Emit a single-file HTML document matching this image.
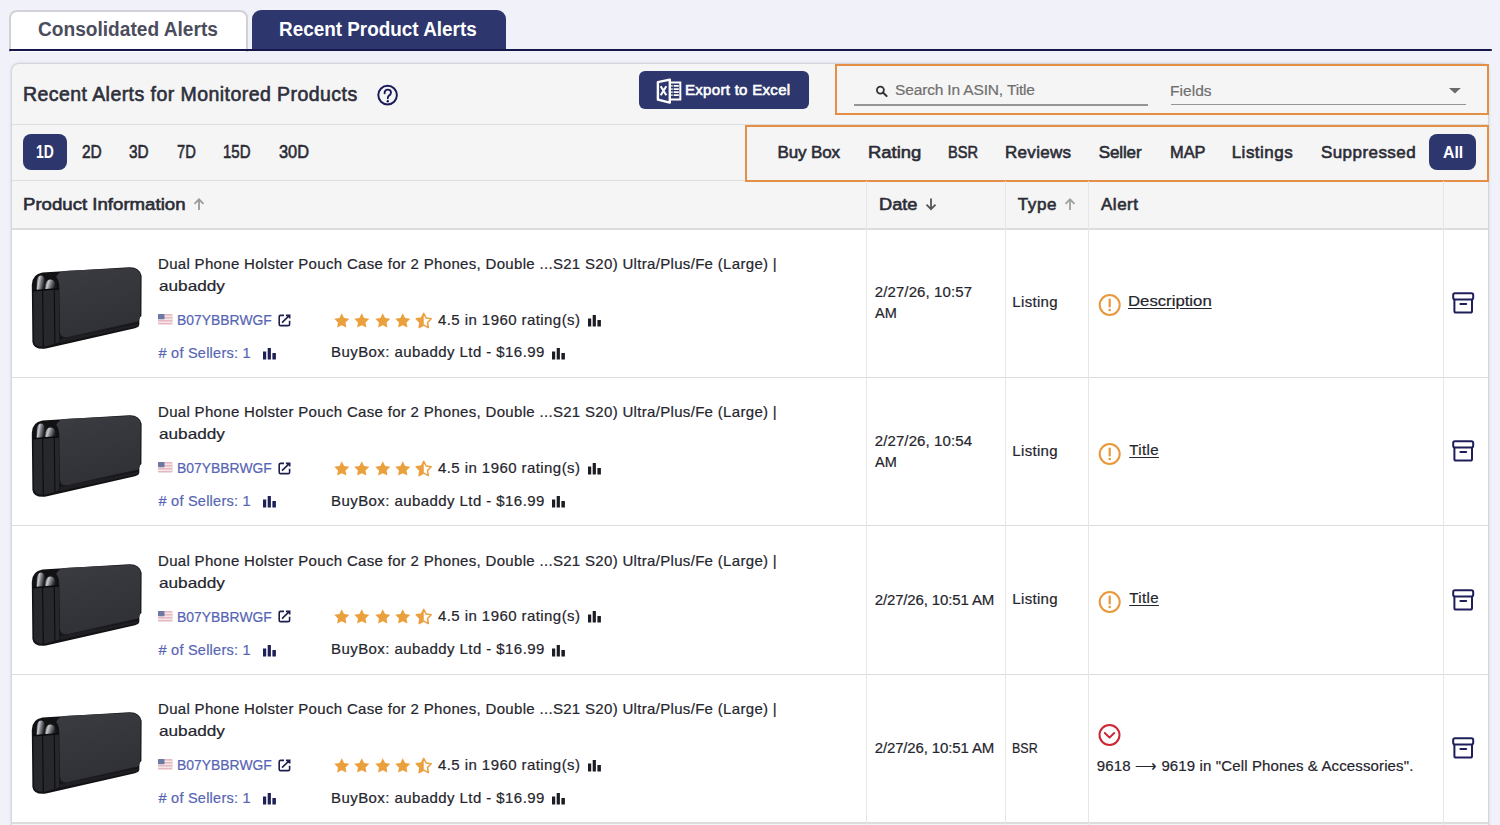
<!DOCTYPE html>
<html><head><meta charset="utf-8"><style>
html,body{margin:0;padding:0;}
body{width:1500px;height:825px;overflow:hidden;position:relative;background:#f1f2f9;font-family:"Liberation Sans",sans-serif;}
.t{position:absolute;white-space:nowrap;}
.n{-webkit-text-stroke:0.2px currentColor;}
.m{-webkit-text-stroke:0.6px currentColor;}
.a{position:absolute;box-sizing:border-box;}
</style></head><body>
<svg width="0" height="0" style="position:absolute"><symbol id="pouch" viewBox="0 0 125 100">
<defs>
<linearGradient id="pg" x1="0" y1="0" x2="0.3" y2="1"><stop offset="0" stop-color="#3b3c42"/><stop offset="1" stop-color="#303136"/></linearGradient>
<linearGradient id="ph" x1="0" y1="0" x2="1" y2="0.3"><stop offset="0" stop-color="#2a2b30"/><stop offset="0.35" stop-color="#c9cbd0"/><stop offset="0.6" stop-color="#7d7f85"/><stop offset="1" stop-color="#1e1f23"/></linearGradient>
</defs>
<path d="M17.5,17.4 L104,12.3 Q114.5,11.8 116.6,20.8 L116.4,61 L114.4,63 L114.3,70 Q113.8,72.2 110,73.2 L21,93.6 Q8.5,95 7.4,87 L6.8,30 Q7,19 17.5,17.4 Z" fill="#121215"/>
<path d="M8.4,36 L33.8,34 L34.3,87.6 L21,91.6 Q10,93 8.9,86 Z" fill="#27282c"/>
<path d="M17.6,35.3 L18.3,92 M29.3,34.3 L29.9,88.6" stroke="#0c0c0e" stroke-width="1.1"/>
<path d="M11.6,35.4 L11.8,26.5 Q12.3,20.6 16.2,20.5 Q19.8,21 19.9,27 L19.9,34.8 Z" fill="url(#ph)"/>
<path d="M20.2,34.8 L20.5,29.5 Q21.5,24.6 25.6,24.6 Q30.2,25 30.6,30.5 L30.7,34.2 Z" fill="url(#ph)"/>
<path d="M7.8,35.8 L34,33.8" stroke="#0a0a0c" stroke-width="1.6"/>
<path d="M31.2,22 Q33.2,16.2 42,15.7 L104,12.9 Q114.5,12.6 115.6,21 L115.3,60.8 Q115,66 111,67.4 L44,82.4 Q35.2,84 34.9,77 L34.3,31.5 Q34,25 31.2,22 Z" fill="url(#pg)"/>
<path d="M35,78.5 Q35.5,83.8 44,82.4 L111,67.4" stroke="#1c1c20" stroke-width="1.2" fill="none"/>
<path d="M35,84 L113.8,68.5 L113.8,71 L35,88 Z" fill="#1f1f23"/>
</symbol></svg>
<div class="a" style="left:8.5px;top:9.5px;width:239.0px;height:42.5px;background:#fff;border:2px solid #d2d2d6;border-bottom:none;border-radius:8px 8px 0 0;"></div>
<div class="a" style="left:252px;top:9.5px;width:253.5px;height:41.5px;background:#2e376d;border-radius:9px 9px 0 0;"></div>
<div class="a" style="left:9px;top:49px;width:1482.5px;height:2px;background:#16174b;border-radius:1px;"></div>
<div class="a" style="left:11px;top:62.5px;width:1478px;height:837.5px;background:#f5f5f5;border:1px solid #d6d6da;border-radius:8px;box-shadow:0 0 3px rgba(0,0,0,0.13);"></div>
<div class="a" style="left:12px;top:124px;width:1476px;height:1px;background:#dedede;"></div>
<div class="a" style="left:12px;top:180px;width:1476px;height:1px;background:#dedede;"></div>
<svg style="position:absolute;left:376px;top:84px;overflow:visible" width="23" height="23" viewBox="0 0 23 23"><circle cx="11.6" cy="11.1" r="9.3" fill="none" stroke="#1b1c5c" stroke-width="2"/><path d="M8.6,9.2 Q8.6,5.6 11.8,5.6 Q15,5.6 15,8.6 Q15,10.4 13,11.6 Q11.8,12.4 11.8,14.2" fill="none" stroke="#1b1c5c" stroke-width="1.9" stroke-linecap="round"/><circle cx="11.8" cy="17.3" r="1.2" fill="#1b1c5c"/></svg>
<div class="a" style="left:638.5px;top:71px;width:170.0px;height:38px;background:#2e376d;border-radius:6px;"></div>
<svg style="position:absolute;left:652px;top:74px;overflow:visible" width="36" height="34" viewBox="0 0 36 34"><path d="M5.9,8.1 L17.8,5.6 L17.8,28.6 L5.9,25.7 Z" fill="none" stroke="#fff" stroke-width="2.4" stroke-linejoin="round"/><path d="M8.7,12.3 L14.3,21.3 M14.3,12.3 L8.7,21.3" stroke="#fff" stroke-width="2.1"/><path d="M17.8,8.6 L28.3,8.6 L28.3,25.4 L17.8,25.4" fill="none" stroke="#fff" stroke-width="2"/><path d="M19.3,11.9 H20.6 M21.7,11.9 H26.8 M19.3,15.1 H20.6 M21.7,15.1 H26.8 M19.3,18.1 H20.6 M21.7,18.1 H26.8 M19.3,21.2 H20.6 M21.7,21.2 H26.8" stroke="#fff" stroke-width="1.8"/></svg>
<div class="a" style="left:834.5px;top:64px;width:654.5px;height:50.5px;border:2px solid #e38f45;"></div>
<svg style="position:absolute;left:875px;top:84.5px;overflow:visible" width="14" height="12" viewBox="0 0 14 12"><circle cx="5.4" cy="5.1" r="3.5" fill="none" stroke="#333" stroke-width="1.8"/><path d="M7.9,7.6 L11.6,11.1" stroke="#333" stroke-width="2" stroke-linecap="round"/></svg>
<div class="a" style="left:854px;top:104px;width:294px;height:1.5px;background:#959595;"></div>
<div class="a" style="left:1171px;top:103.8px;width:295px;height:1.5px;background:#959595;"></div>
<svg style="position:absolute;left:1449px;top:87.5px;overflow:visible" width="12" height="6" viewBox="0 0 12 6"><path d="M0,0 L11.8,0 L5.9,5.6 Z" fill="#6a6a6a"/></svg>
<div class="a" style="left:744.5px;top:124.5px;width:744.5px;height:57.5px;border:2px solid #e38f45;"></div>
<div class="a" style="left:23px;top:134px;width:44px;height:36px;background:#2e376d;border-radius:8px;"></div>
<div class="a" style="left:1429px;top:134px;width:47px;height:36px;background:#2e376d;border-radius:8px;"></div>
<svg style="position:absolute;left:193.2px;top:198px;overflow:visible" width="12" height="13" viewBox="0 0 12 13"><path d="M6,12 L6,1.5 M1.5,5.8 L6,1.3 L10.5,5.8" fill="none" stroke="#9a9a9a" stroke-width="1.8"/></svg>
<svg style="position:absolute;left:924.6px;top:198px;overflow:visible" width="12" height="13" viewBox="0 0 12 13"><path d="M6,0.5 L6,11 M1.5,6.7 L6,11.2 L10.5,6.7" fill="none" stroke="#555" stroke-width="1.8"/></svg>
<svg style="position:absolute;left:1064px;top:198px;overflow:visible" width="12" height="13" viewBox="0 0 12 13"><path d="M6,12 L6,1.5 M1.5,5.8 L6,1.3 L10.5,5.8" fill="none" stroke="#a0a0a0" stroke-width="1.8"/></svg>
<div class="a" style="left:12px;top:228px;width:1476px;height:1.5px;background:#dcdcdc;"></div>
<div class="a" style="left:12px;top:230px;width:1476px;height:147px;background:#fff;"></div>
<div class="a" style="left:12px;top:377px;width:1476px;height:1.5px;background:#dddddf;"></div>
<div class="a" style="left:12px;top:378px;width:1476px;height:147px;background:#fff;"></div>
<div class="a" style="left:12px;top:525px;width:1476px;height:1.5px;background:#dddddf;"></div>
<div class="a" style="left:12px;top:526px;width:1476px;height:148px;background:#fff;"></div>
<div class="a" style="left:12px;top:674px;width:1476px;height:1.5px;background:#dddddf;"></div>
<div class="a" style="left:12px;top:675px;width:1476px;height:147px;background:#fff;"></div>
<div class="a" style="left:12px;top:822px;width:1476px;height:1.5px;background:#dddddf;"></div>
<div class="a" style="left:866px;top:181px;width:1.2000000000000455px;height:644px;background:#e6e6e6;"></div>
<div class="a" style="left:1004.5px;top:181px;width:1.2000000000000455px;height:644px;background:#e6e6e6;"></div>
<div class="a" style="left:1088.3px;top:181px;width:1.2000000000000455px;height:644px;background:#e6e6e6;"></div>
<div class="a" style="left:1443px;top:181px;width:1.2000000000000455px;height:644px;background:#e6e6e6;"></div>
<svg style="position:absolute;left:25px;top:255.0px;overflow:visible" width="125" height="100" viewBox="0 0 125 100"><use href="#pouch"/></svg>
<svg style="position:absolute;left:158px;top:314.0px;overflow:visible" width="15" height="11" viewBox="0 0 15 11"><rect x="0" y="0" width="14.5" height="10.5" rx="1" fill="#e6b8bf"/><rect x="0" y="1.5" width="14.5" height="1.5" fill="#f4e6e8"/><rect x="0" y="4.5" width="14.5" height="1.5" fill="#f4e6e8"/><rect x="0" y="7.5" width="14.5" height="1.5" fill="#f4e6e8"/><rect x="0" y="0" width="6.5" height="5.2" rx="0.8" fill="#6d78a6"/></svg>
<svg style="position:absolute;left:277.5px;top:313.5px;overflow:visible" width="13" height="13" viewBox="0 0 13 13"><path d="M6,1.4 L2.6,1.4 Q1.2,1.4 1.2,2.8 L1.2,10.2 Q1.2,11.6 2.6,11.6 L10.2,11.6 Q11.6,11.6 11.6,10.2 L11.6,6.8" fill="none" stroke="#1d1f4d" stroke-width="1.6"/><path d="M4,8.6 L11,1.9 M7.9,1.4 L11.7,1.4 L11.7,4.4" fill="none" stroke="#1d1f4d" stroke-width="1.6"/></svg>
<svg style="position:absolute;left:333.5px;top:312.5px;overflow:visible" width="16" height="15" viewBox="0 0 16 15"><path d="M7.75,0.30 L10.07,5.00 L15.26,5.76 L11.51,9.42 L12.39,14.59 L7.75,12.15 L3.11,14.59 L3.99,9.42 L0.24,5.76 L5.43,5.00 Z" fill="#eba03e"/></svg>
<svg style="position:absolute;left:354px;top:312.5px;overflow:visible" width="16" height="15" viewBox="0 0 16 15"><path d="M7.75,0.30 L10.07,5.00 L15.26,5.76 L11.51,9.42 L12.39,14.59 L7.75,12.15 L3.11,14.59 L3.99,9.42 L0.24,5.76 L5.43,5.00 Z" fill="#eba03e"/></svg>
<svg style="position:absolute;left:374.5px;top:312.5px;overflow:visible" width="16" height="15" viewBox="0 0 16 15"><path d="M7.75,0.30 L10.07,5.00 L15.26,5.76 L11.51,9.42 L12.39,14.59 L7.75,12.15 L3.11,14.59 L3.99,9.42 L0.24,5.76 L5.43,5.00 Z" fill="#eba03e"/></svg>
<svg style="position:absolute;left:395px;top:312.5px;overflow:visible" width="16" height="15" viewBox="0 0 16 15"><path d="M7.75,0.30 L10.07,5.00 L15.26,5.76 L11.51,9.42 L12.39,14.59 L7.75,12.15 L3.11,14.59 L3.99,9.42 L0.24,5.76 L5.43,5.00 Z" fill="#eba03e"/></svg>
<svg style="position:absolute;left:415.5px;top:312.5px;overflow:visible" width="16" height="15" viewBox="0 0 16 15"><defs><clipPath id="hc0"><rect x="0" y="0" width="7.75" height="15"/></clipPath></defs><path d="M7.75,0.30 L10.07,5.00 L15.26,5.76 L11.51,9.42 L12.39,14.59 L7.75,12.15 L3.11,14.59 L3.99,9.42 L0.24,5.76 L5.43,5.00 Z" fill="none" stroke="#eba03e" stroke-width="1.5" stroke-linejoin="round"/><path d="M7.75,0.30 L10.07,5.00 L15.26,5.76 L11.51,9.42 L12.39,14.59 L7.75,12.15 L3.11,14.59 L3.99,9.42 L0.24,5.76 L5.43,5.00 Z" fill="#eba03e" clip-path="url(#hc0)"/></svg>
<svg style="position:absolute;left:588px;top:314.5px;overflow:visible" width="14" height="12" viewBox="0 0 14 12"><rect x="0" y="3.5" width="3.2" height="8" fill="#1c1d24"/><rect x="4.7" y="0" width="3.2" height="11.5" fill="#1c1d24"/><rect x="9.4" y="5" width="3.5" height="6.5" fill="#1c1d24"/></svg>
<svg style="position:absolute;left:262.8px;top:348.0px;overflow:visible" width="14" height="12" viewBox="0 0 14 12"><rect x="0" y="3.5" width="3.2" height="8" fill="#1d2156"/><rect x="4.7" y="0" width="3.2" height="11.5" fill="#1d2156"/><rect x="9.4" y="5" width="3.5" height="6.5" fill="#1d2156"/></svg>
<svg style="position:absolute;left:552px;top:348.0px;overflow:visible" width="14" height="12" viewBox="0 0 14 12"><rect x="0" y="3.5" width="3.2" height="8" fill="#1c1d24"/><rect x="4.7" y="0" width="3.2" height="11.5" fill="#1c1d24"/><rect x="9.4" y="5" width="3.5" height="6.5" fill="#1c1d24"/></svg>
<svg style="position:absolute;left:1098px;top:293.1px;overflow:visible" width="24" height="24" viewBox="0 0 24 24"><circle cx="11.7" cy="12" r="10" fill="none" stroke="#e8973a" stroke-width="2"/><path d="M11.7,6.5 L11.7,13.5" stroke="#e8973a" stroke-width="2.2" stroke-linecap="round"/><circle cx="11.7" cy="17" r="1.3" fill="#e8973a"/></svg>
<svg style="position:absolute;left:1452px;top:292.0px;overflow:visible" width="23" height="22" viewBox="0 0 23 22"><rect x="1.2" y="1.2" width="20" height="6.4" rx="1.8" fill="none" stroke="#1e1f5a" stroke-width="2"/><path d="M2.4,7.6 L2.4,19 Q2.4,20.6 4,20.6 L18.4,20.6 Q20,20.6 20,19 L20,7.6" fill="none" stroke="#1e1f5a" stroke-width="2"/><path d="M8.4,12 L14.2,12" stroke="#1e1f5a" stroke-width="2" stroke-linecap="round"/></svg>
<svg style="position:absolute;left:25px;top:403.45px;overflow:visible" width="125" height="100" viewBox="0 0 125 100"><use href="#pouch"/></svg>
<svg style="position:absolute;left:158px;top:462.45px;overflow:visible" width="15" height="11" viewBox="0 0 15 11"><rect x="0" y="0" width="14.5" height="10.5" rx="1" fill="#e6b8bf"/><rect x="0" y="1.5" width="14.5" height="1.5" fill="#f4e6e8"/><rect x="0" y="4.5" width="14.5" height="1.5" fill="#f4e6e8"/><rect x="0" y="7.5" width="14.5" height="1.5" fill="#f4e6e8"/><rect x="0" y="0" width="6.5" height="5.2" rx="0.8" fill="#6d78a6"/></svg>
<svg style="position:absolute;left:277.5px;top:461.95px;overflow:visible" width="13" height="13" viewBox="0 0 13 13"><path d="M6,1.4 L2.6,1.4 Q1.2,1.4 1.2,2.8 L1.2,10.2 Q1.2,11.6 2.6,11.6 L10.2,11.6 Q11.6,11.6 11.6,10.2 L11.6,6.8" fill="none" stroke="#1d1f4d" stroke-width="1.6"/><path d="M4,8.6 L11,1.9 M7.9,1.4 L11.7,1.4 L11.7,4.4" fill="none" stroke="#1d1f4d" stroke-width="1.6"/></svg>
<svg style="position:absolute;left:333.5px;top:460.95px;overflow:visible" width="16" height="15" viewBox="0 0 16 15"><path d="M7.75,0.30 L10.07,5.00 L15.26,5.76 L11.51,9.42 L12.39,14.59 L7.75,12.15 L3.11,14.59 L3.99,9.42 L0.24,5.76 L5.43,5.00 Z" fill="#eba03e"/></svg>
<svg style="position:absolute;left:354px;top:460.95px;overflow:visible" width="16" height="15" viewBox="0 0 16 15"><path d="M7.75,0.30 L10.07,5.00 L15.26,5.76 L11.51,9.42 L12.39,14.59 L7.75,12.15 L3.11,14.59 L3.99,9.42 L0.24,5.76 L5.43,5.00 Z" fill="#eba03e"/></svg>
<svg style="position:absolute;left:374.5px;top:460.95px;overflow:visible" width="16" height="15" viewBox="0 0 16 15"><path d="M7.75,0.30 L10.07,5.00 L15.26,5.76 L11.51,9.42 L12.39,14.59 L7.75,12.15 L3.11,14.59 L3.99,9.42 L0.24,5.76 L5.43,5.00 Z" fill="#eba03e"/></svg>
<svg style="position:absolute;left:395px;top:460.95px;overflow:visible" width="16" height="15" viewBox="0 0 16 15"><path d="M7.75,0.30 L10.07,5.00 L15.26,5.76 L11.51,9.42 L12.39,14.59 L7.75,12.15 L3.11,14.59 L3.99,9.42 L0.24,5.76 L5.43,5.00 Z" fill="#eba03e"/></svg>
<svg style="position:absolute;left:415.5px;top:460.95px;overflow:visible" width="16" height="15" viewBox="0 0 16 15"><defs><clipPath id="hc1"><rect x="0" y="0" width="7.75" height="15"/></clipPath></defs><path d="M7.75,0.30 L10.07,5.00 L15.26,5.76 L11.51,9.42 L12.39,14.59 L7.75,12.15 L3.11,14.59 L3.99,9.42 L0.24,5.76 L5.43,5.00 Z" fill="none" stroke="#eba03e" stroke-width="1.5" stroke-linejoin="round"/><path d="M7.75,0.30 L10.07,5.00 L15.26,5.76 L11.51,9.42 L12.39,14.59 L7.75,12.15 L3.11,14.59 L3.99,9.42 L0.24,5.76 L5.43,5.00 Z" fill="#eba03e" clip-path="url(#hc1)"/></svg>
<svg style="position:absolute;left:588px;top:462.95px;overflow:visible" width="14" height="12" viewBox="0 0 14 12"><rect x="0" y="3.5" width="3.2" height="8" fill="#1c1d24"/><rect x="4.7" y="0" width="3.2" height="11.5" fill="#1c1d24"/><rect x="9.4" y="5" width="3.5" height="6.5" fill="#1c1d24"/></svg>
<svg style="position:absolute;left:262.8px;top:496.45px;overflow:visible" width="14" height="12" viewBox="0 0 14 12"><rect x="0" y="3.5" width="3.2" height="8" fill="#1d2156"/><rect x="4.7" y="0" width="3.2" height="11.5" fill="#1d2156"/><rect x="9.4" y="5" width="3.5" height="6.5" fill="#1d2156"/></svg>
<svg style="position:absolute;left:552px;top:496.45px;overflow:visible" width="14" height="12" viewBox="0 0 14 12"><rect x="0" y="3.5" width="3.2" height="8" fill="#1c1d24"/><rect x="4.7" y="0" width="3.2" height="11.5" fill="#1c1d24"/><rect x="9.4" y="5" width="3.5" height="6.5" fill="#1c1d24"/></svg>
<svg style="position:absolute;left:1098px;top:441.55px;overflow:visible" width="24" height="24" viewBox="0 0 24 24"><circle cx="11.7" cy="12" r="10" fill="none" stroke="#e8973a" stroke-width="2"/><path d="M11.7,6.5 L11.7,13.5" stroke="#e8973a" stroke-width="2.2" stroke-linecap="round"/><circle cx="11.7" cy="17" r="1.3" fill="#e8973a"/></svg>
<svg style="position:absolute;left:1452px;top:440.45px;overflow:visible" width="23" height="22" viewBox="0 0 23 22"><rect x="1.2" y="1.2" width="20" height="6.4" rx="1.8" fill="none" stroke="#1e1f5a" stroke-width="2"/><path d="M2.4,7.6 L2.4,19 Q2.4,20.6 4,20.6 L18.4,20.6 Q20,20.6 20,19 L20,7.6" fill="none" stroke="#1e1f5a" stroke-width="2"/><path d="M8.4,12 L14.2,12" stroke="#1e1f5a" stroke-width="2" stroke-linecap="round"/></svg>
<svg style="position:absolute;left:25px;top:551.9px;overflow:visible" width="125" height="100" viewBox="0 0 125 100"><use href="#pouch"/></svg>
<svg style="position:absolute;left:158px;top:610.9px;overflow:visible" width="15" height="11" viewBox="0 0 15 11"><rect x="0" y="0" width="14.5" height="10.5" rx="1" fill="#e6b8bf"/><rect x="0" y="1.5" width="14.5" height="1.5" fill="#f4e6e8"/><rect x="0" y="4.5" width="14.5" height="1.5" fill="#f4e6e8"/><rect x="0" y="7.5" width="14.5" height="1.5" fill="#f4e6e8"/><rect x="0" y="0" width="6.5" height="5.2" rx="0.8" fill="#6d78a6"/></svg>
<svg style="position:absolute;left:277.5px;top:610.4px;overflow:visible" width="13" height="13" viewBox="0 0 13 13"><path d="M6,1.4 L2.6,1.4 Q1.2,1.4 1.2,2.8 L1.2,10.2 Q1.2,11.6 2.6,11.6 L10.2,11.6 Q11.6,11.6 11.6,10.2 L11.6,6.8" fill="none" stroke="#1d1f4d" stroke-width="1.6"/><path d="M4,8.6 L11,1.9 M7.9,1.4 L11.7,1.4 L11.7,4.4" fill="none" stroke="#1d1f4d" stroke-width="1.6"/></svg>
<svg style="position:absolute;left:333.5px;top:609.4px;overflow:visible" width="16" height="15" viewBox="0 0 16 15"><path d="M7.75,0.30 L10.07,5.00 L15.26,5.76 L11.51,9.42 L12.39,14.59 L7.75,12.15 L3.11,14.59 L3.99,9.42 L0.24,5.76 L5.43,5.00 Z" fill="#eba03e"/></svg>
<svg style="position:absolute;left:354px;top:609.4px;overflow:visible" width="16" height="15" viewBox="0 0 16 15"><path d="M7.75,0.30 L10.07,5.00 L15.26,5.76 L11.51,9.42 L12.39,14.59 L7.75,12.15 L3.11,14.59 L3.99,9.42 L0.24,5.76 L5.43,5.00 Z" fill="#eba03e"/></svg>
<svg style="position:absolute;left:374.5px;top:609.4px;overflow:visible" width="16" height="15" viewBox="0 0 16 15"><path d="M7.75,0.30 L10.07,5.00 L15.26,5.76 L11.51,9.42 L12.39,14.59 L7.75,12.15 L3.11,14.59 L3.99,9.42 L0.24,5.76 L5.43,5.00 Z" fill="#eba03e"/></svg>
<svg style="position:absolute;left:395px;top:609.4px;overflow:visible" width="16" height="15" viewBox="0 0 16 15"><path d="M7.75,0.30 L10.07,5.00 L15.26,5.76 L11.51,9.42 L12.39,14.59 L7.75,12.15 L3.11,14.59 L3.99,9.42 L0.24,5.76 L5.43,5.00 Z" fill="#eba03e"/></svg>
<svg style="position:absolute;left:415.5px;top:609.4px;overflow:visible" width="16" height="15" viewBox="0 0 16 15"><defs><clipPath id="hc2"><rect x="0" y="0" width="7.75" height="15"/></clipPath></defs><path d="M7.75,0.30 L10.07,5.00 L15.26,5.76 L11.51,9.42 L12.39,14.59 L7.75,12.15 L3.11,14.59 L3.99,9.42 L0.24,5.76 L5.43,5.00 Z" fill="none" stroke="#eba03e" stroke-width="1.5" stroke-linejoin="round"/><path d="M7.75,0.30 L10.07,5.00 L15.26,5.76 L11.51,9.42 L12.39,14.59 L7.75,12.15 L3.11,14.59 L3.99,9.42 L0.24,5.76 L5.43,5.00 Z" fill="#eba03e" clip-path="url(#hc2)"/></svg>
<svg style="position:absolute;left:588px;top:611.4px;overflow:visible" width="14" height="12" viewBox="0 0 14 12"><rect x="0" y="3.5" width="3.2" height="8" fill="#1c1d24"/><rect x="4.7" y="0" width="3.2" height="11.5" fill="#1c1d24"/><rect x="9.4" y="5" width="3.5" height="6.5" fill="#1c1d24"/></svg>
<svg style="position:absolute;left:262.8px;top:644.9px;overflow:visible" width="14" height="12" viewBox="0 0 14 12"><rect x="0" y="3.5" width="3.2" height="8" fill="#1d2156"/><rect x="4.7" y="0" width="3.2" height="11.5" fill="#1d2156"/><rect x="9.4" y="5" width="3.5" height="6.5" fill="#1d2156"/></svg>
<svg style="position:absolute;left:552px;top:644.9px;overflow:visible" width="14" height="12" viewBox="0 0 14 12"><rect x="0" y="3.5" width="3.2" height="8" fill="#1c1d24"/><rect x="4.7" y="0" width="3.2" height="11.5" fill="#1c1d24"/><rect x="9.4" y="5" width="3.5" height="6.5" fill="#1c1d24"/></svg>
<svg style="position:absolute;left:1098px;top:590.0px;overflow:visible" width="24" height="24" viewBox="0 0 24 24"><circle cx="11.7" cy="12" r="10" fill="none" stroke="#e8973a" stroke-width="2"/><path d="M11.7,6.5 L11.7,13.5" stroke="#e8973a" stroke-width="2.2" stroke-linecap="round"/><circle cx="11.7" cy="17" r="1.3" fill="#e8973a"/></svg>
<svg style="position:absolute;left:1452px;top:588.9px;overflow:visible" width="23" height="22" viewBox="0 0 23 22"><rect x="1.2" y="1.2" width="20" height="6.4" rx="1.8" fill="none" stroke="#1e1f5a" stroke-width="2"/><path d="M2.4,7.6 L2.4,19 Q2.4,20.6 4,20.6 L18.4,20.6 Q20,20.6 20,19 L20,7.6" fill="none" stroke="#1e1f5a" stroke-width="2"/><path d="M8.4,12 L14.2,12" stroke="#1e1f5a" stroke-width="2" stroke-linecap="round"/></svg>
<svg style="position:absolute;left:25px;top:700.3499999999999px;overflow:visible" width="125" height="100" viewBox="0 0 125 100"><use href="#pouch"/></svg>
<svg style="position:absolute;left:158px;top:759.3499999999999px;overflow:visible" width="15" height="11" viewBox="0 0 15 11"><rect x="0" y="0" width="14.5" height="10.5" rx="1" fill="#e6b8bf"/><rect x="0" y="1.5" width="14.5" height="1.5" fill="#f4e6e8"/><rect x="0" y="4.5" width="14.5" height="1.5" fill="#f4e6e8"/><rect x="0" y="7.5" width="14.5" height="1.5" fill="#f4e6e8"/><rect x="0" y="0" width="6.5" height="5.2" rx="0.8" fill="#6d78a6"/></svg>
<svg style="position:absolute;left:277.5px;top:758.8499999999999px;overflow:visible" width="13" height="13" viewBox="0 0 13 13"><path d="M6,1.4 L2.6,1.4 Q1.2,1.4 1.2,2.8 L1.2,10.2 Q1.2,11.6 2.6,11.6 L10.2,11.6 Q11.6,11.6 11.6,10.2 L11.6,6.8" fill="none" stroke="#1d1f4d" stroke-width="1.6"/><path d="M4,8.6 L11,1.9 M7.9,1.4 L11.7,1.4 L11.7,4.4" fill="none" stroke="#1d1f4d" stroke-width="1.6"/></svg>
<svg style="position:absolute;left:333.5px;top:757.8499999999999px;overflow:visible" width="16" height="15" viewBox="0 0 16 15"><path d="M7.75,0.30 L10.07,5.00 L15.26,5.76 L11.51,9.42 L12.39,14.59 L7.75,12.15 L3.11,14.59 L3.99,9.42 L0.24,5.76 L5.43,5.00 Z" fill="#eba03e"/></svg>
<svg style="position:absolute;left:354px;top:757.8499999999999px;overflow:visible" width="16" height="15" viewBox="0 0 16 15"><path d="M7.75,0.30 L10.07,5.00 L15.26,5.76 L11.51,9.42 L12.39,14.59 L7.75,12.15 L3.11,14.59 L3.99,9.42 L0.24,5.76 L5.43,5.00 Z" fill="#eba03e"/></svg>
<svg style="position:absolute;left:374.5px;top:757.8499999999999px;overflow:visible" width="16" height="15" viewBox="0 0 16 15"><path d="M7.75,0.30 L10.07,5.00 L15.26,5.76 L11.51,9.42 L12.39,14.59 L7.75,12.15 L3.11,14.59 L3.99,9.42 L0.24,5.76 L5.43,5.00 Z" fill="#eba03e"/></svg>
<svg style="position:absolute;left:395px;top:757.8499999999999px;overflow:visible" width="16" height="15" viewBox="0 0 16 15"><path d="M7.75,0.30 L10.07,5.00 L15.26,5.76 L11.51,9.42 L12.39,14.59 L7.75,12.15 L3.11,14.59 L3.99,9.42 L0.24,5.76 L5.43,5.00 Z" fill="#eba03e"/></svg>
<svg style="position:absolute;left:415.5px;top:757.8499999999999px;overflow:visible" width="16" height="15" viewBox="0 0 16 15"><defs><clipPath id="hc3"><rect x="0" y="0" width="7.75" height="15"/></clipPath></defs><path d="M7.75,0.30 L10.07,5.00 L15.26,5.76 L11.51,9.42 L12.39,14.59 L7.75,12.15 L3.11,14.59 L3.99,9.42 L0.24,5.76 L5.43,5.00 Z" fill="none" stroke="#eba03e" stroke-width="1.5" stroke-linejoin="round"/><path d="M7.75,0.30 L10.07,5.00 L15.26,5.76 L11.51,9.42 L12.39,14.59 L7.75,12.15 L3.11,14.59 L3.99,9.42 L0.24,5.76 L5.43,5.00 Z" fill="#eba03e" clip-path="url(#hc3)"/></svg>
<svg style="position:absolute;left:588px;top:759.8499999999999px;overflow:visible" width="14" height="12" viewBox="0 0 14 12"><rect x="0" y="3.5" width="3.2" height="8" fill="#1c1d24"/><rect x="4.7" y="0" width="3.2" height="11.5" fill="#1c1d24"/><rect x="9.4" y="5" width="3.5" height="6.5" fill="#1c1d24"/></svg>
<svg style="position:absolute;left:262.8px;top:793.3499999999999px;overflow:visible" width="14" height="12" viewBox="0 0 14 12"><rect x="0" y="3.5" width="3.2" height="8" fill="#1d2156"/><rect x="4.7" y="0" width="3.2" height="11.5" fill="#1d2156"/><rect x="9.4" y="5" width="3.5" height="6.5" fill="#1d2156"/></svg>
<svg style="position:absolute;left:552px;top:793.3499999999999px;overflow:visible" width="14" height="12" viewBox="0 0 14 12"><rect x="0" y="3.5" width="3.2" height="8" fill="#1c1d24"/><rect x="4.7" y="0" width="3.2" height="11.5" fill="#1c1d24"/><rect x="9.4" y="5" width="3.5" height="6.5" fill="#1c1d24"/></svg>
<svg style="position:absolute;left:1098px;top:722.6px;overflow:visible" width="24" height="24" viewBox="0 0 24 24"><circle cx="11.5" cy="12" r="10" fill="none" stroke="#cc2533" stroke-width="2"/><path d="M6.8,10 L11.5,14.6 L16.2,10" fill="none" stroke="#cc2533" stroke-width="2" stroke-linecap="round" stroke-linejoin="round"/></svg>
<svg style="position:absolute;left:1452px;top:737.3499999999999px;overflow:visible" width="23" height="22" viewBox="0 0 23 22"><rect x="1.2" y="1.2" width="20" height="6.4" rx="1.8" fill="none" stroke="#1e1f5a" stroke-width="2"/><path d="M2.4,7.6 L2.4,19 Q2.4,20.6 4,20.6 L18.4,20.6 Q20,20.6 20,19 L20,7.6" fill="none" stroke="#1e1f5a" stroke-width="2"/><path d="M8.4,12 L14.2,12" stroke="#1e1f5a" stroke-width="2" stroke-linecap="round"/></svg>
<div class="t" style="left:37.50px;top:19px;font:bold 20px/20px 'Liberation Sans',sans-serif;color:#4b4c5c;letter-spacing:0.000px;transform:scaleX(0.9561);transform-origin:0 0;">Consolidated Alerts</div>
<div class="t" style="left:279.06px;top:19px;font:bold 20px/20px 'Liberation Sans',sans-serif;color:#ffffff;letter-spacing:0.000px;transform:scaleX(0.9448);transform-origin:0 0;">Recent Product Alerts</div>
<div class="t m" style="left:22.90px;top:85px;font:normal 19.5px/19.5px 'Liberation Sans',sans-serif;color:#2e2f3b;letter-spacing:0.447px;">Recent Alerts for Monitored Products</div>
<div class="t m" style="left:685.00px;top:82px;font:normal 15px/15px 'Liberation Sans',sans-serif;color:#ffffff;letter-spacing:0.304px;">Export to Excel</div>
<div class="t n" style="left:895.00px;top:82px;font:normal 15.5px/15.5px 'Liberation Sans',sans-serif;color:#6f6f6f;letter-spacing:-0.151px;">Search In ASIN, Title</div>
<div class="t n" style="left:1170.00px;top:83px;font:normal 15.5px/15.5px 'Liberation Sans',sans-serif;color:#6f6f6f;letter-spacing:0.041px;">Fields</div>
<div class="t" style="left:35.93px;top:143px;font:bold 18px/18px 'Liberation Sans',sans-serif;color:#ffffff;letter-spacing:0.000px;transform:scaleX(0.7724);transform-origin:0 0;">1D</div>
<div class="t m" style="left:81.50px;top:143px;font:normal 18px/18px 'Liberation Sans',sans-serif;color:#2b2c36;letter-spacing:0.000px;transform:scaleX(0.8605);transform-origin:0 0;">2D</div>
<div class="t m" style="left:129.40px;top:143px;font:normal 18px/18px 'Liberation Sans',sans-serif;color:#2b2c36;letter-spacing:0.000px;transform:scaleX(0.8518);transform-origin:0 0;">3D</div>
<div class="t m" style="left:177.40px;top:143px;font:normal 18px/18px 'Liberation Sans',sans-serif;color:#2b2c36;letter-spacing:0.000px;transform:scaleX(0.8170);transform-origin:0 0;">7D</div>
<div class="t m" style="left:223.47px;top:143px;font:normal 18px/18px 'Liberation Sans',sans-serif;color:#2b2c36;letter-spacing:0.000px;transform:scaleX(0.8338);transform-origin:0 0;">15D</div>
<div class="t m" style="left:279.00px;top:143px;font:normal 18px/18px 'Liberation Sans',sans-serif;color:#2b2c36;letter-spacing:0.000px;transform:scaleX(0.9085);transform-origin:0 0;">30D</div>
<div class="t m" style="left:777.50px;top:144px;font:normal 17px/17px 'Liberation Sans',sans-serif;color:#2b2c36;letter-spacing:-0.118px;">Buy Box</div>
<div class="t m" style="left:867.62px;top:144px;font:normal 17px/17px 'Liberation Sans',sans-serif;color:#2b2c36;letter-spacing:0.000px;transform:scaleX(1.0842);transform-origin:0 0;">Rating</div>
<div class="t m" style="left:947.64px;top:144px;font:normal 17px/17px 'Liberation Sans',sans-serif;color:#2b2c36;letter-spacing:0.000px;transform:scaleX(0.8581);transform-origin:0 0;">BSR</div>
<div class="t m" style="left:1005.00px;top:144px;font:normal 17px/17px 'Liberation Sans',sans-serif;color:#2b2c36;letter-spacing:0.310px;">Reviews</div>
<div class="t m" style="left:1098.70px;top:144px;font:normal 17px/17px 'Liberation Sans',sans-serif;color:#2b2c36;letter-spacing:-0.120px;">Seller</div>
<div class="t m" style="left:1169.64px;top:144px;font:normal 17px/17px 'Liberation Sans',sans-serif;color:#2b2c36;letter-spacing:0.000px;transform:scaleX(0.9634);transform-origin:0 0;">MAP</div>
<div class="t m" style="left:1231.70px;top:144px;font:normal 17px/17px 'Liberation Sans',sans-serif;color:#2b2c36;letter-spacing:0.480px;">Listings</div>
<div class="t m" style="left:1320.90px;top:144px;font:normal 17px/17px 'Liberation Sans',sans-serif;color:#2b2c36;letter-spacing:0.447px;">Suppressed</div>
<div class="t" style="left:1443.40px;top:144px;font:bold 17px/17px 'Liberation Sans',sans-serif;color:#ffffff;letter-spacing:0.000px;transform:scaleX(0.9333);transform-origin:0 0;">All</div>
<div class="t m" style="left:22.70px;top:196px;font:normal 17px/17px 'Liberation Sans',sans-serif;color:#2b2c36;letter-spacing:0.000px;transform:scaleX(1.0953);transform-origin:0 0;">Product Information</div>
<div class="t m" style="left:878.53px;top:196px;font:normal 17px/17px 'Liberation Sans',sans-serif;color:#2b2c36;letter-spacing:0.000px;transform:scaleX(1.0710);transform-origin:0 0;">Date</div>
<div class="t m" style="left:1017.80px;top:196px;font:normal 17px/17px 'Liberation Sans',sans-serif;color:#2b2c36;letter-spacing:0.600px;">Type</div>
<div class="t m" style="left:1101.00px;top:196px;font:normal 17px/17px 'Liberation Sans',sans-serif;color:#2b2c36;letter-spacing:0.517px;">Alert</div>
<div class="t n" style="left:158.00px;top:256px;font:normal 15px/15px 'Liberation Sans',sans-serif;color:#25252d;letter-spacing:0.318px;">Dual Phone Holster Pouch Case for 2 Phones, Double ...S21 S20) Ultra/Plus/Fe (Large) |</div>
<div class="t n" style="left:158.50px;top:278px;font:normal 15px/15px 'Liberation Sans',sans-serif;color:#25252d;letter-spacing:0.000px;transform:scaleX(1.1455);transform-origin:0 0;">aubaddy</div>
<div class="t n" style="left:176.54px;top:313px;font:normal 14.5px/14.5px 'Liberation Sans',sans-serif;color:#5765b4;letter-spacing:0.000px;transform:scaleX(0.9593);transform-origin:0 0;">B07YBBRWGF</div>
<div class="t n" style="left:438.00px;top:312px;font:normal 15px/15px 'Liberation Sans',sans-serif;color:#25252d;letter-spacing:0.429px;">4.5 in 1960 rating(s)</div>
<div class="t n" style="left:158.50px;top:346px;font:normal 14.5px/14.5px 'Liberation Sans',sans-serif;color:#5765b4;letter-spacing:0.243px;"># of Sellers: 1</div>
<div class="t n" style="left:331.00px;top:344px;font:normal 15px/15px 'Liberation Sans',sans-serif;color:#25252d;letter-spacing:0.427px;">BuyBox: aubaddy Ltd - $16.99</div>
<div class="t n" style="left:874.70px;top:284px;font:normal 15px/15px 'Liberation Sans',sans-serif;color:#25252d;letter-spacing:0.117px;">2/27/26, 10:57</div>
<div class="t n" style="left:874.70px;top:305px;font:normal 15px/15px 'Liberation Sans',sans-serif;color:#25252d;letter-spacing:0.000px;transform:scaleX(0.9680);transform-origin:0 0;">AM</div>
<div class="t n" style="left:1012.30px;top:294px;font:normal 15px/15px 'Liberation Sans',sans-serif;color:#25252d;letter-spacing:0.330px;">Listing</div>
<div class="t n" style="left:1128.08px;top:293px;font:normal 15px/15px 'Liberation Sans',sans-serif;color:#25252d;letter-spacing:0.000px;transform:scaleX(1.1155);transform-origin:0 0;text-decoration:underline;text-underline-offset:2px;">Description</div>
<div class="t n" style="left:158.00px;top:404px;font:normal 15px/15px 'Liberation Sans',sans-serif;color:#25252d;letter-spacing:0.318px;">Dual Phone Holster Pouch Case for 2 Phones, Double ...S21 S20) Ultra/Plus/Fe (Large) |</div>
<div class="t n" style="left:158.50px;top:426px;font:normal 15px/15px 'Liberation Sans',sans-serif;color:#25252d;letter-spacing:0.000px;transform:scaleX(1.1455);transform-origin:0 0;">aubaddy</div>
<div class="t n" style="left:176.54px;top:461px;font:normal 14.5px/14.5px 'Liberation Sans',sans-serif;color:#5765b4;letter-spacing:0.000px;transform:scaleX(0.9593);transform-origin:0 0;">B07YBBRWGF</div>
<div class="t n" style="left:438.00px;top:460px;font:normal 15px/15px 'Liberation Sans',sans-serif;color:#25252d;letter-spacing:0.429px;">4.5 in 1960 rating(s)</div>
<div class="t n" style="left:158.50px;top:494px;font:normal 14.5px/14.5px 'Liberation Sans',sans-serif;color:#5765b4;letter-spacing:0.243px;"># of Sellers: 1</div>
<div class="t n" style="left:331.00px;top:493px;font:normal 15px/15px 'Liberation Sans',sans-serif;color:#25252d;letter-spacing:0.427px;">BuyBox: aubaddy Ltd - $16.99</div>
<div class="t n" style="left:874.70px;top:433px;font:normal 15px/15px 'Liberation Sans',sans-serif;color:#25252d;letter-spacing:0.117px;">2/27/26, 10:54</div>
<div class="t n" style="left:874.70px;top:454px;font:normal 15px/15px 'Liberation Sans',sans-serif;color:#25252d;letter-spacing:0.000px;transform:scaleX(0.9680);transform-origin:0 0;">AM</div>
<div class="t n" style="left:1012.30px;top:443px;font:normal 15px/15px 'Liberation Sans',sans-serif;color:#25252d;letter-spacing:0.330px;">Listing</div>
<div class="t n" style="left:1129.20px;top:442px;font:normal 15px/15px 'Liberation Sans',sans-serif;color:#25252d;letter-spacing:0.390px;text-decoration:underline;text-underline-offset:2px;">Title</div>
<div class="t n" style="left:158.00px;top:553px;font:normal 15px/15px 'Liberation Sans',sans-serif;color:#25252d;letter-spacing:0.318px;">Dual Phone Holster Pouch Case for 2 Phones, Double ...S21 S20) Ultra/Plus/Fe (Large) |</div>
<div class="t n" style="left:158.50px;top:575px;font:normal 15px/15px 'Liberation Sans',sans-serif;color:#25252d;letter-spacing:0.000px;transform:scaleX(1.1455);transform-origin:0 0;">aubaddy</div>
<div class="t n" style="left:176.54px;top:610px;font:normal 14.5px/14.5px 'Liberation Sans',sans-serif;color:#5765b4;letter-spacing:0.000px;transform:scaleX(0.9593);transform-origin:0 0;">B07YBBRWGF</div>
<div class="t n" style="left:438.00px;top:608px;font:normal 15px/15px 'Liberation Sans',sans-serif;color:#25252d;letter-spacing:0.429px;">4.5 in 1960 rating(s)</div>
<div class="t n" style="left:158.50px;top:643px;font:normal 14.5px/14.5px 'Liberation Sans',sans-serif;color:#5765b4;letter-spacing:0.243px;"># of Sellers: 1</div>
<div class="t n" style="left:331.00px;top:641px;font:normal 15px/15px 'Liberation Sans',sans-serif;color:#25252d;letter-spacing:0.427px;">BuyBox: aubaddy Ltd - $16.99</div>
<div class="t n" style="left:874.70px;top:592px;font:normal 15px/15px 'Liberation Sans',sans-serif;color:#25252d;letter-spacing:-0.137px;">2/27/26, 10:51 AM</div>
<div class="t n" style="left:1012.30px;top:591px;font:normal 15px/15px 'Liberation Sans',sans-serif;color:#25252d;letter-spacing:0.330px;">Listing</div>
<div class="t n" style="left:1129.20px;top:590px;font:normal 15px/15px 'Liberation Sans',sans-serif;color:#25252d;letter-spacing:0.390px;text-decoration:underline;text-underline-offset:2px;">Title</div>
<div class="t n" style="left:158.00px;top:701px;font:normal 15px/15px 'Liberation Sans',sans-serif;color:#25252d;letter-spacing:0.318px;">Dual Phone Holster Pouch Case for 2 Phones, Double ...S21 S20) Ultra/Plus/Fe (Large) |</div>
<div class="t n" style="left:158.50px;top:723px;font:normal 15px/15px 'Liberation Sans',sans-serif;color:#25252d;letter-spacing:0.000px;transform:scaleX(1.1455);transform-origin:0 0;">aubaddy</div>
<div class="t n" style="left:176.54px;top:758px;font:normal 14.5px/14.5px 'Liberation Sans',sans-serif;color:#5765b4;letter-spacing:0.000px;transform:scaleX(0.9593);transform-origin:0 0;">B07YBBRWGF</div>
<div class="t n" style="left:438.00px;top:757px;font:normal 15px/15px 'Liberation Sans',sans-serif;color:#25252d;letter-spacing:0.429px;">4.5 in 1960 rating(s)</div>
<div class="t n" style="left:158.50px;top:791px;font:normal 14.5px/14.5px 'Liberation Sans',sans-serif;color:#5765b4;letter-spacing:0.243px;"># of Sellers: 1</div>
<div class="t n" style="left:331.00px;top:790px;font:normal 15px/15px 'Liberation Sans',sans-serif;color:#25252d;letter-spacing:0.427px;">BuyBox: aubaddy Ltd - $16.99</div>
<div class="t n" style="left:874.70px;top:740px;font:normal 15px/15px 'Liberation Sans',sans-serif;color:#25252d;letter-spacing:-0.137px;">2/27/26, 10:51 AM</div>
<div class="t n" style="left:1012.47px;top:740px;font:normal 15px/15px 'Liberation Sans',sans-serif;color:#25252d;letter-spacing:0.000px;transform:scaleX(0.8331);transform-origin:0 0;">BSR</div>
<div class="t n" style="left:1096.80px;top:758px;font:normal 15px/15px 'Liberation Sans',sans-serif;color:#25252d;letter-spacing:0.128px;">9618 ⟶ 9619 in "Cell Phones &amp; Accessories".</div>
</body></html>
